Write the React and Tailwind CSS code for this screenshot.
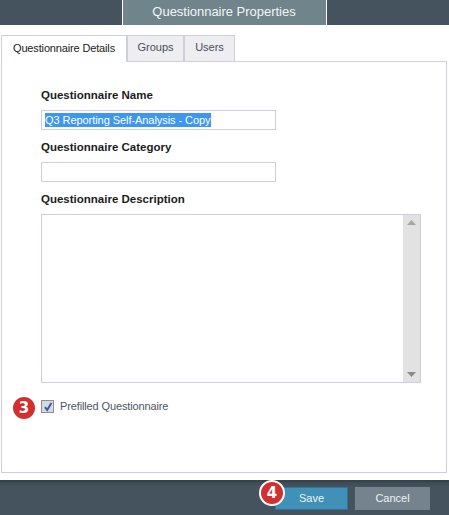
import React from 'react';

const Badge = ({ n, className }) => (
  <span className={`absolute flex items-center justify-center rounded-full bg-[#d32f2f] font-['DejaVu_Sans',sans-serif] font-bold text-white ${className}`}>
    {n}
  </span>
);

const Label = ({ children, className = '' }) => (
  <label className={`block text-[11.5px] leading-[14px] font-bold text-[#1c1c1c] ${className}`}>{children}</label>
);

export default function App() {
  return (
    <div className="relative flex h-[515px] w-[449px] flex-col overflow-hidden bg-white font-['Liberation_Sans',Arial,sans-serif]">
      {/* title bar */}
      <div className="flex h-[25px] justify-center bg-[#44535e] pr-[1px]">
        <div className="flex w-[205px] items-center justify-center border-x border-white bg-[#70858b] pb-[1px] text-[13px] tracking-[-0.02px] text-[#f2f5f5]">
          Questionnaire Properties
        </div>
      </div>

      <div className="flex-1 pt-[10px] pl-[1px] pr-[2px]">
        {/* tabs */}
        <div className="relative z-10 flex h-[27px] text-[11px] leading-none">
          <div className="flex h-[27px] w-[126px] items-center justify-center border-x border-t border-[#cfcfdc] bg-white pb-[2px] tracking-[-0.15px] text-[#222]">
            Questionnaire Details
          </div>
          <div className="flex h-[26px] w-[57px] items-center justify-center border-x border-t border-[#cfcfdc] bg-[#eeedf2] pb-[2px] text-[#4a4f5c]">
            Groups
          </div>
          <div className="flex h-[26px] w-[51px] items-center justify-center border-x border-t border-[#cfcfdc] bg-[#eeedf2] pb-[2px] text-[#4a4f5c]">
            Users
          </div>
        </div>

        {/* panel */}
        <div className="-mt-[1px] h-[412px] border border-[#cfcfdc] pt-[26px] pl-[39px]">
          <Label>Questionnaire Name</Label>
          <div className="mt-[8px] flex h-[20px] w-[235px] items-center border border-[#cfcfdc] pl-[3px] text-[11px] tracking-[-0.06px] text-white">
            <span className="bg-[#3d97f0] leading-[14px]">Q3 Reporting Self-Analysis - Copy</span>
          </div>
          <Label className="mt-[10px]">Questionnaire Category</Label>
          <div className="mt-[8px] h-[20px] w-[235px] border border-[#cfcfdc]" />
          <Label className="mt-[10px]">Questionnaire Description</Label>
          <div className="mt-[8px] flex h-[169px] w-[380px] justify-end border border-[#cfcfdc]">
            <div className="flex w-[17px] flex-col items-center justify-between bg-[#e2e2e3] py-[5px]">
              <svg width="9" height="5" viewBox="0 0 9 5"><path d="M4.5 0 9 5H0z" fill="#a6a6a6" /></svg>
              <svg width="9" height="5" viewBox="0 0 9 5"><path d="M0 0h9L4.5 5z" fill="#8c8c8c" /></svg>
            </div>
          </div>
          <div className="mt-[17px] flex items-center gap-[6px]">
            <div className="flex h-[13px] w-[13px] items-center justify-center border border-[#8e8e96] bg-[#d6d8e2]">
              <svg width="10" height="10" viewBox="0 0 10 10"><path d="M2 5.2 4.2 8 8.4 1" fill="none" stroke="#3f5aa0" strokeWidth="2" /></svg>
            </div>
            <span className="text-[11px] leading-[13px] tracking-[-0.13px] text-[#4d5563]">Prefilled Questionnaire</span>
          </div>
        </div>
      </div>

      {/* footer */}
      <div className="flex h-[35px] items-center justify-end gap-[7px] border-t-2 border-[#37434c] bg-gradient-to-b from-[#3d4a54] to-[#44535e] to-[15%] pr-[19px] text-[11px] text-[#f0f3f5]">
        <button type="button" className="h-[23px] w-[73px] border border-[#2f7396] bg-[#4190b7]">Save</button>
        <button type="button" className="h-[23px] w-[75px] bg-[#74838e]">Cancel</button>
      </div>

      <Badge n="3" className="left-[13px] top-[397px] h-[22px] w-[22px] text-[15px]" />
      <Badge n="4" className="left-[259px] top-[480px] h-[26px] w-[26px] border-2 border-white text-[15px]" />
    </div>
  );
}
